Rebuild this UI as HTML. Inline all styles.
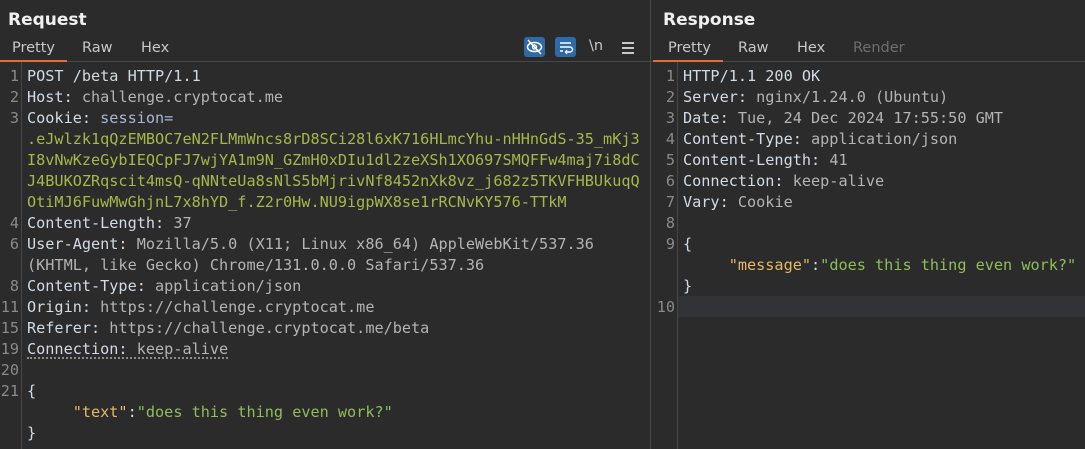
<!DOCTYPE html>
<html><head><meta charset="utf-8"><style>
*{margin:0;padding:0;box-sizing:border-box}
body{width:1085px;height:449px;background:#2b2b2b;overflow:hidden;position:relative;font-family:"Liberation Sans","DejaVu Sans",sans-serif}
.title{position:absolute;top:10px;font-weight:bold;font-size:17px;color:#f0f0f0;font-family:"DejaVu Sans",sans-serif}
.tab{position:absolute;top:40px;font-size:14.5px;color:#c8c8c8;font-family:"DejaVu Sans",sans-serif}
.sep{position:absolute;top:61px;height:1px;background:#474747}
.ul{position:absolute;top:60px;height:2px;background:#e06c38}
.gut{position:absolute;top:62px;width:1px;height:387px;background:#474747}
.row{position:absolute;height:21px;line-height:21px;font-family:"DejaVu Sans Mono","Liberation Mono",monospace;font-size:15.2px;white-space:pre;color:#b4b4b4}
.ln{position:absolute;text-align:right;color:#8a8a8a;font-family:"DejaVu Sans Mono","Liberation Mono",monospace;font-size:15.2px;height:21px;line-height:21px}
.k{color:#cfdbe6}.v{color:#b4b4b4}.b{color:#a9b7d6}.g{color:#a5b84a}.o{color:#e6b866}.s{color:#8fbd5a}
.ic{position:absolute;top:37px;width:21px;height:20px;background:#2f6aa8;border-radius:3px}
</style></head><body>
<div style="position:absolute;left:650px;top:0;width:1px;height:449px;background:#474747"></div>
<div class="title" style="left:8px">Request</div>
<div class="title" style="left:663px">Response</div>
<div class="tab" style="left:12px">Pretty</div>
<div class="tab" style="left:82px">Raw</div>
<div class="tab" style="left:141px">Hex</div>
<div class="tab" style="left:668px">Pretty</div>
<div class="tab" style="left:738px">Raw</div>
<div class="tab" style="left:797px">Hex</div>
<div class="tab" style="left:853px;color:#6e6e6e">Render</div>
<div class="sep" style="left:0;width:650px"></div>
<div class="sep" style="left:651px;width:434px"></div>
<div class="ul" style="left:0;width:67px"></div>
<div class="ul" style="left:653px;width:70px"></div>
<div class="ic" style="left:524px"><svg width="21" height="20" viewBox="0 0 21 20"><ellipse cx="10.5" cy="10" rx="7" ry="4.5" fill="none" stroke="#fff" stroke-width="1.5"/><circle cx="10.5" cy="10" r="2" fill="none" stroke="#fff" stroke-width="1.4"/><line x1="4" y1="3" x2="17" y2="17" stroke="#fff" stroke-width="1.5"/></svg></div>
<div class="ic" style="left:555px"><svg width="21" height="20" viewBox="0 0 21 20"><path d="M5 6h11M5 10h10a2.5 2.5 0 0 1 0 5h-4M5 14h3" fill="none" stroke="#fff" stroke-width="1.5"/><path d="M12 13l-1.5 2 1.5 2" fill="none" stroke="#fff" stroke-width="1.3"/></svg></div>
<div class="tab" style="left:589px;top:38px;color:#c8c8c8">\n</div>
<div style="position:absolute;left:622px;top:42px;width:12px">
<div style="height:1.5px;background:#c8c8c8;margin-bottom:3.5px"></div><div style="height:1.5px;background:#c8c8c8;margin-bottom:3.5px"></div><div style="height:1.5px;background:#c8c8c8"></div></div>
<div class="gut" style="left:21px"></div>
<div class="gut" style="left:677px"></div>
<div style="position:absolute;left:678px;top:296px;width:407px;height:21px;background:#313336"></div>

<!-- left lines -->
<div class="ln" style="left:0;width:19px;top:66px">1</div>
<div class="ln" style="left:0;width:19px;top:87px">2</div>
<div class="ln" style="left:0;width:19px;top:108px">3</div>
<div class="ln" style="left:0;width:19px;top:213px">4</div>
<div class="ln" style="left:0;width:19px;top:234px">6</div>
<div class="ln" style="left:0;width:19px;top:276px">8</div>
<div class="ln" style="left:0;width:19px;top:297px">11</div>
<div class="ln" style="left:0;width:19px;top:318px">15</div>
<div class="ln" style="left:0;width:19px;top:339px">19</div>
<div class="ln" style="left:0;width:19px;top:360px">20</div>
<div class="ln" style="left:0;width:19px;top:381px">21</div>

<div class="row" style="left:27px;top:66px"><span class="k">POST /beta HTTP/1.1</span></div>
<div class="row" style="left:27px;top:87px"><span class="k">Host: </span>challenge.cryptocat.me</div>
<div class="row" style="left:27px;top:108px"><span class="k">Cookie: </span><span class="b">session=</span></div>
<div class="row g" style="left:27px;top:129px">.eJwlzk1qQzEMBOC7eN2FLMmWncs8rD8SCi28l6xK716HLmcYhu-nHHnGdS-35_mKj3</div>
<div class="row g" style="left:27px;top:150px">I8vNwKzeGybIEQCpFJ7wjYA1m9N_GZmH0xDIu1dl2zeXSh1XO697SMQFFw4maj7i8dC</div>
<div class="row g" style="left:27px;top:171px">J4BUKOZRqscit4msQ-qNNteUa8sNlS5bMjrivNf8452nXk8vz_j682z5TKVFHBUkuqQ</div>
<div class="row g" style="left:27px;top:192px">OtiMJ6FuwMwGhjnL7x8hYD_f.Z2r0Hw.NU9igpWX8se1rRCNvKY576-TTkM</div>
<div class="row" style="left:27px;top:213px"><span class="k">Content-Length: </span>37</div>
<div class="row" style="left:27px;top:234px"><span class="k">User-Agent: </span>Mozilla/5.0 (X11; Linux x86_64) AppleWebKit/537.36</div>
<div class="row" style="left:27px;top:255px">(KHTML, like Gecko) Chrome/131.0.0.0 Safari/537.36</div>
<div class="row" style="left:27px;top:276px"><span class="k">Content-Type: </span>application/json</div>
<div class="row" style="left:27px;top:297px"><span class="k">Origin: </span>https://challenge.cryptocat.me</div>
<div class="row" style="left:27px;top:318px"><span class="k">Referer: </span>https://challenge.cryptocat.me/beta</div>
<div class="row" style="left:27px;top:339px;border-bottom:2px dotted #8a8a8a;height:20px;line-height:21px"><span class="k">Connection: </span>keep-alive</div>
<div class="row" style="left:27px;top:381px"><span class="k">{</span></div>
<div class="row" style="left:27px;top:402px">     <span class="o">"text"</span><span class="k">:</span><span class="s">"does this thing even work?"</span></div>
<div class="row" style="left:27px;top:423px"><span class="k">}</span></div>

<!-- right lines -->
<div class="ln" style="left:651px;width:24px;top:66px">1</div>
<div class="ln" style="left:651px;width:24px;top:87px">2</div>
<div class="ln" style="left:651px;width:24px;top:108px">3</div>
<div class="ln" style="left:651px;width:24px;top:129px">4</div>
<div class="ln" style="left:651px;width:24px;top:150px">5</div>
<div class="ln" style="left:651px;width:24px;top:171px">6</div>
<div class="ln" style="left:651px;width:24px;top:192px">7</div>
<div class="ln" style="left:651px;width:24px;top:213px">8</div>
<div class="ln" style="left:651px;width:24px;top:234px">9</div>
<div class="ln" style="left:651px;width:24px;top:297px">10</div>

<div class="row" style="left:683px;top:66px"><span class="k">HTTP/1.1 200 OK</span></div>
<div class="row" style="left:683px;top:87px"><span class="k">Server: </span>nginx/1.24.0 (Ubuntu)</div>
<div class="row" style="left:683px;top:108px"><span class="k">Date: </span>Tue, 24 Dec 2024 17:55:50 GMT</div>
<div class="row" style="left:683px;top:129px"><span class="k">Content-Type: </span>application/json</div>
<div class="row" style="left:683px;top:150px"><span class="k">Content-Length: </span>41</div>
<div class="row" style="left:683px;top:171px"><span class="k">Connection: </span>keep-alive</div>
<div class="row" style="left:683px;top:192px"><span class="k">Vary: </span>Cookie</div>
<div class="row" style="left:683px;top:234px"><span class="k">{</span></div>
<div class="row" style="left:683px;top:255px">     <span class="o">"message"</span><span class="k">:</span><span class="s">"does this thing even work?"</span></div>
<div class="row" style="left:683px;top:276px"><span class="k">}</span></div>
</body></html>
